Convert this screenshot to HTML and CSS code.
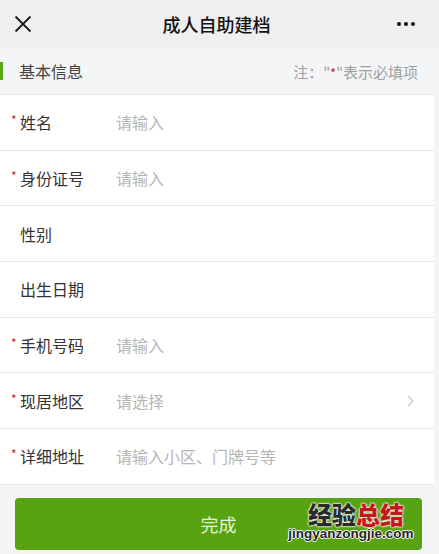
FILE: index.html
```html
<!DOCTYPE html>
<html>
<head>
  <meta charset="utf-8">
  <title>成人自助建档</title>
  <link rel="stylesheet" href="styles.css">
</head>
<body>
  <div class="page">
    <div class="nav-bar">
      <span class="nav-close">
        <svg width="18" height="18" viewBox="0 0 18 18"><path d="M1.5 1.5 L16.5 16.5 M16.5 1.5 L1.5 16.5" stroke="#1a1a1a" stroke-width="1.8" fill="none"/></svg>
      </span>
      <span class="nav-title">成人自助建档</span>
      <span class="nav-more"><i></i><i></i><i></i></span>
    </div>

    <div class="section-head">
      <span class="section-title">基本信息</span>
      <span class="section-note">注："<b>*</b>"表示必填项</span>
    </div>

    <form class="form-list">
      <div class="form-row">
        <label class="row-label"><b class="req">*</b>姓名</label>
        <span class="row-value">请输入</span>
      </div>
      <div class="form-row">
        <label class="row-label"><b class="req">*</b>身份证号</label>
        <span class="row-value">请输入</span>
      </div>
      <div class="form-row">
        <label class="row-label"><b class="req"></b>性别</label>
        <span class="row-value"></span>
      </div>
      <div class="form-row">
        <label class="row-label"><b class="req"></b>出生日期</label>
        <span class="row-value"></span>
      </div>
      <div class="form-row">
        <label class="row-label"><b class="req">*</b>手机号码</label>
        <span class="row-value">请输入</span>
      </div>
      <div class="form-row">
        <label class="row-label"><b class="req">*</b>现居地区</label>
        <span class="row-value">请选择</span>
        <span class="row-arrow">
          <svg width="7" height="12" viewBox="0 0 7 12"><path d="M1 1 L6 6 L1 11" stroke="#c8c8c8" stroke-width="1.2" fill="none"/></svg>
        </span>
      </div>
      <div class="form-row">
        <label class="row-label"><b class="req">*</b>详细地址</label>
        <span class="row-value">请输入小区、门牌号等</span>
      </div>
    </form>

    <div class="button-container">
      <button type="button" class="btn-done">完成</button>
      <div class="watermark">
        <div class="wm-title">经验<em>总结</em></div>
        <div class="wm-url">jingyanzongjie.com</div>
      </div>
    </div>
  </div>
</body>
</html>
```

FILE: styles.css
```css
/* page */
body {
  margin: 0;
  background-color: #f4f5f6;
  font-family: "Noto Sans CJK SC", "Noto Sans", sans-serif;
}

.page {
  width: 439px;
  height: 554px;
  overflow: hidden;
}

/* top bar */
.nav-bar {
  height: 48px;
  background-color: #efefef;
  display: flex;
  align-items: center;
  padding: 0 14px;
}

.nav-close {
  display: flex;
  width: 18px;
  height: 18px;
}

.nav-title {
  flex: 1;
  text-align: center;
  font-size: 18px;
  font-weight: 500;
  color: #111;
  margin-left: 4px;
}

.nav-more {
  display: flex;
  gap: 3px;
  margin-right: 10px;
}

.nav-more i {
  width: 4px;
  height: 4px;
  border-radius: 50%;
  background-color: #111;
}

/* section header */
.section-head {
  height: 46px;
  width: 434px;
  display: flex;
  align-items: center;
  justify-content: space-between;
  background-color: #f3f5f7;
  box-sizing: border-box;
  padding: 0 16px;
  position: relative;
}

.section-head::before {
  content: "";
  position: absolute;
  left: 0;
  top: 14px;
  width: 3px;
  height: 18px;
  background-color: #5aa51a;
}

.section-title {
  font-size: 16px;
  color: #444;
  padding-left: 3px;
}

.section-note {
  font-size: 15px;
  color: #a0a0a0;
}

.section-note b {
  color: #d0021b;
  font-weight: normal;
  font-size: 12px;
}

/* form rows */
.form-list {
  width: 434px;
  margin: 0;
  background-color: #fff;
}

.form-row {
  height: 54.7px;
  display: flex;
  align-items: center;
  border-top: 1px solid #e6e6e6;
  padding-right: 20px;
}

.row-label {
  width: 116px;
  display: flex;
  align-items: center;
  font-size: 16px;
  color: #333;
  box-sizing: border-box;
  padding-left: 11px;
}

.req {
  width: 9px;
  color: #c1272d;
  font-weight: normal;
  font-size: 12px;
  margin-top: -5px;
}

.row-value {
  flex: 1;
  font-size: 16px;
  color: #b5b5b5;
}

.row-arrow {
  display: flex;
}

/* bottom button */
.button-container {
  border-top: 1px solid #e6e6e6;
  width: 434px;
  padding: 13px 0 0 15px;
  box-sizing: border-box;
  position: relative;
}

.btn-done {
  width: 407px;
  height: 52px;
  background-color: #58a312;
  color: #e8f3dc;
  font-family: "Noto Sans CJK SC", sans-serif;
  font-size: 18px;
  border: none;
  border-radius: 4px;
  cursor: pointer;
}

.watermark {
  position: absolute;
  left: 284px;
  top: 16px;
  width: 134px;
  text-align: center;
}

.wm-title {
  font-size: 24px;
  line-height: 25px;
  font-weight: 900;
  color: #2a2a2a;
  padding-left: 10px;
  text-shadow: 0 0 2px #fff, 0 0 2px #fff, 0 0 2px #fff;
}

.wm-title em {
  font-style: normal;
  color: #c7161d;
}

.wm-url {
  font-family: "Liberation Sans", sans-serif;
  font-size: 13.5px;
  line-height: 14px;
  margin-top: 1px;
  font-weight: bold;
  color: #222;
  text-shadow: 1px 0 0 #fff, -1px 0 0 #fff, 0 1px 0 #fff, 0 -1px 0 #fff;
}
```
